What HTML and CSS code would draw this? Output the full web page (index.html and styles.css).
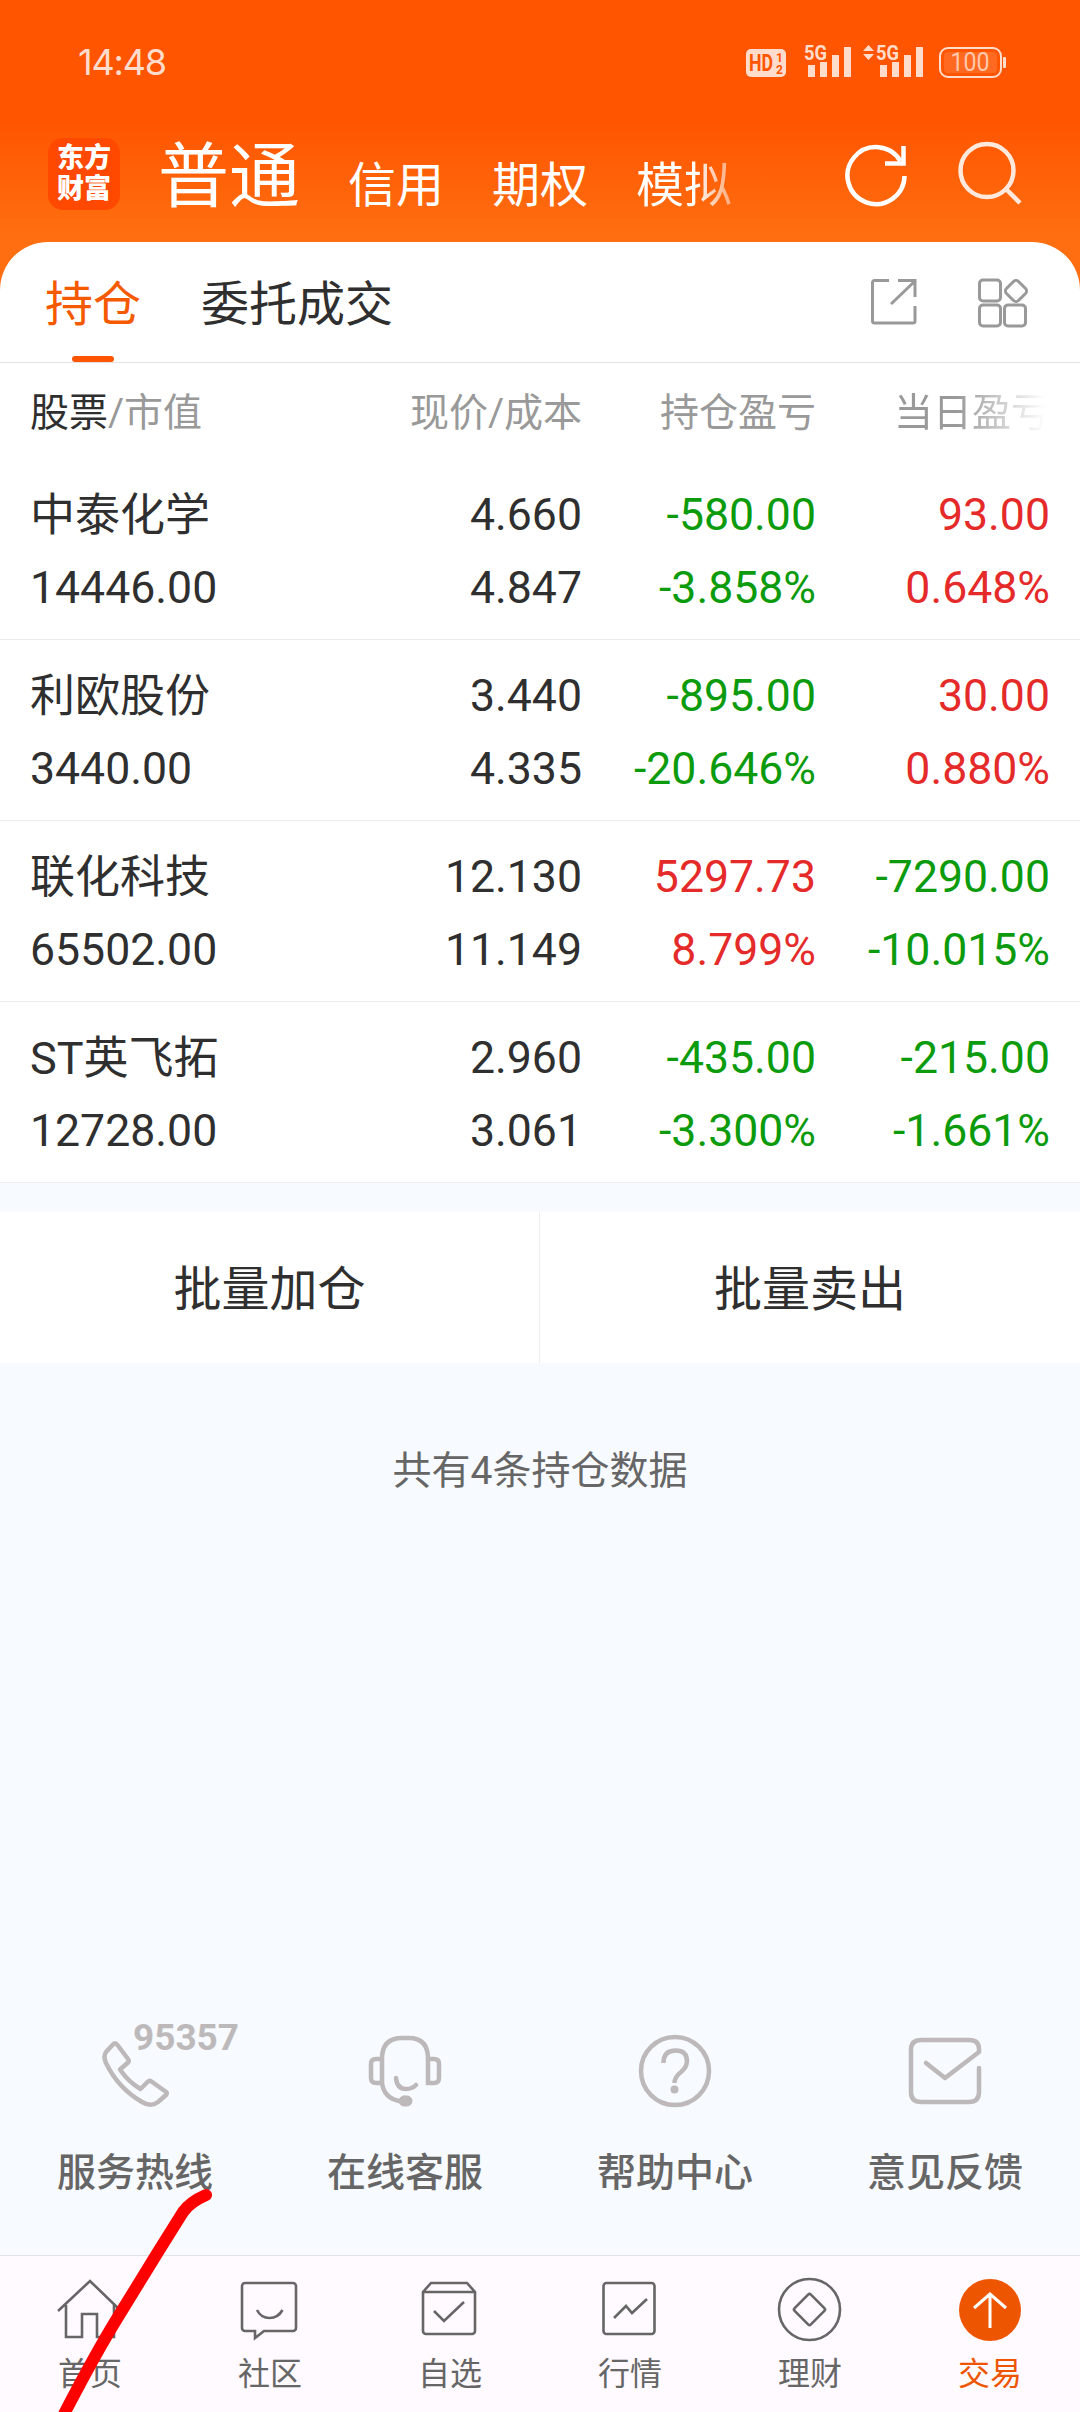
FILE: index.html
```html
<!DOCTYPE html>
<html lang="zh-CN">
<head>
<meta charset="utf-8">
<title>持仓</title>
<link rel="stylesheet" href="styles.css">
</head>
<body>
<div class="screen">
  <header class="header">
    <div class="status">
      <span class="clock">14:48</span>
      <svg class="status-icons" width="262" height="54" viewBox="744 35 262 54" fill="#ffdccb">
        <rect x="746" y="49" width="40" height="28" rx="5"/>
        <text class="hd" x="749" y="71" textLength="24" lengthAdjust="spacingAndGlyphs">HD<tspan class="hd-n"> </tspan></text>
        <text class="hd-n" x="776" y="61.500">1</text>
        <text class="hd-n" x="776" y="73.500">2</text>
        <text class="net" x="804" y="60" textLength="23" lengthAdjust="spacingAndGlyphs">5G</text>
        <path d="M808 65h7v12h-7zM820 62h7v15h-7zM832 55h7v22h-7zM844 47h7v30h-7z"/>
        <path d="M863 51l5.500-6 5.500 6zM863 54l5.500 6 5.500-6z"/>
        <text class="net" x="876" y="60" textLength="23" lengthAdjust="spacingAndGlyphs">5G</text>
        <path d="M880 65h7v12h-7zM892 62h7v15h-7zM904 55h7v22h-7zM916 47h7v30h-7z"/>
        <rect x="940" y="48" width="61" height="29" rx="8" fill="none" stroke="#ffdccb" stroke-width="2"/>
        <rect x="944" y="52" width="53" height="21" rx="4" fill="#ff6a20"/>
        <rect x="1003" y="57" width="3" height="11" rx="1"/>
        <text class="batt" x="970" y="71" text-anchor="middle" textLength="39" lengthAdjust="spacingAndGlyphs">100</text>
      </svg>
    </div>
    <div class="topbar">
      <div class="logo"><span>东方</span><span>财富</span></div>
      <nav class="accounts">
        <span class="current">普通</span><span>信用</span><span>期权</span><span class="fade-tab">模拟</span>
      </nav>
      <svg class="refresh" width="64" height="64" viewBox="0 0 64 64" fill="none" stroke="#fff" stroke-width="4.500">
        <path d="M59.500 33A28.500 28.500 0 1 1 55.500 18"/><path d="M40 20.500h18.500V3"/>
      </svg>
      <svg class="search" width="64" height="64" viewBox="0 0 64 64" fill="none" stroke="#ffe8dc" stroke-width="4.500">
        <circle cx="29" cy="29.500" r="26.500"/><path d="M48 48l14 14"/>
      </svg>
    </div>
  </header>

  <main class="sheet">
    <div class="tabs">
      <span class="tab active">持仓</span><span class="tab">委托成交</span>
      <svg class="share" width="48" height="48" viewBox="0 0 48 48" fill="none" stroke="#999" stroke-width="3">
        <path d="M19 2.500H4.500a2 2 0 0 0-2 2V43a2 2 0 0 0 2 2H43a2 2 0 0 0 2-2V28M28 2.500h17V19M44 4L21 26"/>
      </svg>
      <svg class="widgets" width="52" height="50" viewBox="0 0 52 50" fill="none" stroke="#999" stroke-width="3">
        <rect x="2.500" y="2" width="21" height="21" rx="3.500"/><rect x="2.500" y="27" width="21" height="21" rx="3.500"/><rect x="27.500" y="27" width="21" height="21" rx="3.500"/>
        <rect x="30.500" y="4.500" width="17" height="17" rx="3.500" transform="rotate(45 39 13)"/>
      </svg>
    </div>
    <div class="grid head">
      <span><b>股票</b>/市值</span><span>现价/成本</span><span>持仓盈亏</span><span class="fade-col">当日盈亏</span>
    </div>
    <div class="grid row">
      <span class="name">中泰化学</span><span>4.660</span><span class="down">-580.00</span><span class="up">93.00</span>
      <span>14446.00</span><span>4.847</span><span class="down">-3.858%</span><span class="up">0.648%</span>
    </div>
    <div class="grid row">
      <span class="name">利欧股份</span><span>3.440</span><span class="down">-895.00</span><span class="up">30.00</span>
      <span>3440.00</span><span>4.335</span><span class="down">-20.646%</span><span class="up">0.880%</span>
    </div>
    <div class="grid row">
      <span class="name">联化科技</span><span>12.130</span><span class="up">5297.73</span><span class="down">-7290.00</span>
      <span>65502.00</span><span>11.149</span><span class="up">8.799%</span><span class="down">-10.015%</span>
    </div>
    <div class="grid row">
      <span class="name">ST英飞拓</span><span>2.960</span><span class="down">-435.00</span><span class="down">-215.00</span>
      <span>12728.00</span><span>3.061</span><span class="down">-3.300%</span><span class="down">-1.661%</span>
    </div>
  </main>

  <div class="batch"><span>批量加仓</span><span>批量卖出</span></div>
  <p class="count">共有4条持仓数据</p>

  <section class="services">
    <div class="service">
      <svg width="270" height="110" viewBox="0 2010 270 110" fill="none" stroke="#bdb9bb" stroke-width="4.500" stroke-linejoin="round">
        <path d="M112.500 2045q2.500-3.500 5 0l10.500 14q1.500 2 0 3.500l-8 7q8 12 20.500 19.500l7-7q2-2 4-.5l14 10q2.500 1.500.5 3.500l-8 7q-7 5.500-16 0q-24-14-36-39q-3-7 0-11z"/>
        <text class="hotline" x="133" y="2050" textLength="106" lengthAdjust="spacingAndGlyphs">95357</text>
      </svg>
      <span>服务热线</span>
    </div>
    <div class="service">
      <svg width="270" height="110" viewBox="270 2010 270 110" fill="none" stroke="#bdb9bb" stroke-width="4.500" stroke-linecap="round">
        <path d="M382 2083v-24q0-21 20-21h7q19 0 19 21v24h6q5 0 5-5v-14q0-5-5-5h-6M382 2059h-6q-5 0-5 5v14q0 5 5 5h6q2 15 17 18M396 2078q1 11 10 11q6 0 10-4"/>
        <rect x="399" y="2096" width="13" height="10" rx="5" fill="#bdb9bb" stroke-width="1"/>
      </svg>
      <span>在线客服</span>
    </div>
    <div class="service">
      <svg width="270" height="110" viewBox="540 2010 270 110" fill="none" stroke="#bdb9bb" stroke-width="4.500">
        <circle cx="675" cy="2071" r="34"/>
        <path d="M663.500 2063q0-12.500 12-12.500q11.500 0 11.500 10.500q0 6-6 11q-6.500 5-6.500 11"/><circle cx="674.500" cy="2089.500" r="4" fill="#bdb9bb" stroke="none"/>
      </svg>
      <span>帮助中心</span>
    </div>
    <div class="service">
      <svg width="270" height="110" viewBox="810 2010 270 110" fill="none" stroke="#bdb9bb" stroke-width="4.500" stroke-linecap="round" stroke-linejoin="round">
        <path d="M926 2063l19 15 34-26v-3q0-9-10-9h-48q-10 0-10 10v42q0 10 10 10h48q10 0 10-10v-24"/>
      </svg>
      <span>意见反馈</span>
    </div>
  </section>

  <nav class="bottom">
    <div class="item">
      <svg width="70" height="70" viewBox="55 2274 70 70"><path d="M58 2311l32-30 31 30M66 2305v32h16v-23h15v23h17v-32"/></svg>
      <span>首页</span>
    </div>
    <div class="item">
      <svg width="70" height="70" viewBox="235 2274 70 70"><path d="M245 2283h48a3 3 0 0 1 3 3v42a3 3 0 0 1-3 3h-29l-9 7v-7h-10a3 3 0 0 1-3-3v-42a3 3 0 0 1 3-3zM257 2310q4 8 12.500 8t13-8"/></svg>
      <span>社区</span>
    </div>
    <div class="item">
      <svg width="70" height="70" viewBox="415 2274 70 70"><path d="M423 2292l8-9h36l8 9v39a3 3 0 0 1-3 3h-46a3 3 0 0 1-3-3zM423 2292h52M434 2311l10 10 20-19"/></svg>
      <span>自选</span>
    </div>
    <div class="item">
      <svg width="70" height="70" viewBox="595 2274 70 70"><rect x="603.500" y="2283" width="51" height="51" rx="3"/><path d="M614 2318l12-12 6 7 15-14"/></svg>
      <span>行情</span>
    </div>
    <div class="item">
      <svg width="70" height="70" viewBox="775 2274 70 70"><circle cx="809.500" cy="2309.500" r="30.500"/><rect x="798" y="2298" width="23" height="23" rx="2" transform="rotate(45 809.500 2309.500)"/></svg>
      <span>理财</span>
    </div>
    <div class="item on">
      <svg width="70" height="70" viewBox="955 2274 70 70"><circle class="disc" cx="990" cy="2310" r="31"/><path class="arrow" d="M990 2328v-33M974 2308l16-14 16 14"/></svg>
      <span>交易</span>
    </div>
  </nav>

  <svg class="scribble" width="220" height="232" viewBox="0 2180 220 232">
    <path d="M206 2195q-16 7-23 17L158 2252L118 2317Q94 2356 62 2418"/>
  </svg>
</div>
</body>
</html>
```
FILE: styles.css
```css
* { box-sizing: border-box; }
body {
  margin: 0;
  font-family: Roboto, "Noto Sans CJK SC", sans-serif;
  color: #2f2f2f;
}
.screen {
  position: relative;
  display: flex;
  flex-direction: column;
  width: 1080px;
  height: 2412px;
  overflow: hidden;
  background: #f7faff;
}
.header {
  height: 292px;
  flex: none;
  background: linear-gradient(#ff5500 120px, #ff6f12 240px);
}
.status {
  display: flex;
  justify-content: space-between;
  align-items: center;
  height: 124px;
  padding: 0 74px 0 78px;
}
.clock { font: 36px/36px Inter, sans-serif; letter-spacing: -1.2px; color: #ffdccb; }
.hd { font: bold 23px Roboto, sans-serif; fill: #ff5500; }
.hd-n { font: bold 12px Roboto, sans-serif; fill: #ff5500; }
.net { font: bold 20px Roboto, sans-serif; }
.batt { font: 25px Roboto, sans-serif; fill: #ffc8ac; }
.topbar {
  display: flex;
  height: 100px;
  padding: 14px 58px 0 48px;
  color: #fff;
}
.logo {
  display: flex;
  flex-direction: column;
  justify-content: center;
  align-items: center;
  width: 72px;
  height: 72px;
  border-radius: 15px;
  background: #ff4800;
  font-size: 27px;
  line-height: 31px;
  font-weight: 900;
}
.accounts {
  display: flex;
  align-items: flex-start;
  gap: 48px;
  margin: -14px auto 0 38px;
  height: 100px;
  font-size: 48px;
  line-height: 124px;
}
.accounts .current { font-size: 71px; line-height: 105px; }
.fade-tab {
  background: linear-gradient(90deg, #fff 60%, #ffffff70);
  background-clip: text;
  color: transparent;
}
.refresh { margin: 5px 49px 0 0; }
.search { margin-top: 3px; }
.sheet {
  flex: none;
  height: 941px;
  margin-top: -50px;
  border-radius: 48px 48px 0 0;
  background: #fff;
  border-bottom: 1px solid #ececec;
}
.tabs {
  display: flex;
  align-items: flex-start;
  height: 121px;
  padding-left: 45px;
  border-bottom: 1px solid #e3e3e3;
  font-size: 48px;
}
.tab { height: 120px; line-height: 126px; margin-right: 60px; }
.tab.active { position: relative; color: #f55a00; }
.tab.active::after {
  content: "";
  position: absolute;
  left: 27px;
  bottom: 0;
  width: 42px;
  height: 6px;
  border-radius: 3px;
  background: #ff5500;
}
.share { margin: 36px 59px 0 auto; }
.widgets { margin: 36px 51px 0 0; }
.grid {
  display: grid;
  grid-template-columns: 352px 200px 234px 234px;
  margin: 0;
  padding-left: 30px;
}
.grid span { text-align: right; white-space: nowrap; }
.grid span:nth-child(4n + 1) { text-align: left; }
.head {
  height: 96px;
  line-height: 101px;
  font-size: 39px;
  color: #999;
}
.head b { font-weight: 400; color: #2f2f2f; }
.head .fade-col {
  background: linear-gradient(90deg, #999 60%, #fff 98%);
  background-clip: text;
  color: transparent;
}
.row {
  height: 181px;
  padding-top: 20px;
  grid-auto-rows: 73px;
  line-height: 73px;
  font-size: 44.6px;
  border-bottom: 1px solid #ececec;
}
.row .name { font-size: 45px; line-height: 74px; }
.row:last-child { border-bottom: 0; }
.up { color: #e52a2a; }
.down { color: #0c9b0c; }
.batch {
  display: flex;
  flex: none;
  height: 151px;
  margin-top: 29px;
  background: #fff;
  font-size: 48px;
  line-height: 156px;
  text-align: center;
}
.batch span { width: 539px; }
.batch span + span { width: 541px; border-left: 1px solid #eee; }
.count {
  margin: 78px 0 0;
  text-align: center;
  font-size: 39px;
  line-height: 60px;
  color: #666;
}
.services { display: flex; margin-top: auto; height: 245px; }
.service {
  display: flex;
  flex-direction: column;
  width: 270px;
  text-align: center;
  font-size: 39px;
  line-height: 60px;
  font-weight: 500;
  color: #666;
}
.service span { margin-top: 23px; }
.hotline { font: bold 37px Roboto, sans-serif; fill: #bdb9bb; stroke: none; }
.bottom {
  display: flex;
  flex: none;
  height: 157px;
  border-top: 1px solid #e3e3e6;
  background: #fffaff;
}
.item {
  display: flex;
  flex-direction: column;
  align-items: center;
  width: 180px;
  padding-top: 18px;
  font-size: 32px;
  line-height: 40px;
  color: #666;
}
.item span { margin-top: 10px; }
.item svg { fill: none; stroke: #666; stroke-width: 2.6; }
.item.on { color: #ee5500; }
.item .disc { fill: #ee5500; stroke: none; }
.item .arrow { stroke: #fff; stroke-width: 3; }
.scribble {
  position: absolute;
  left: 0;
  bottom: 0;
  fill: none;
  stroke: #f00;
  stroke-width: 12;
  stroke-linecap: round;
}
```
